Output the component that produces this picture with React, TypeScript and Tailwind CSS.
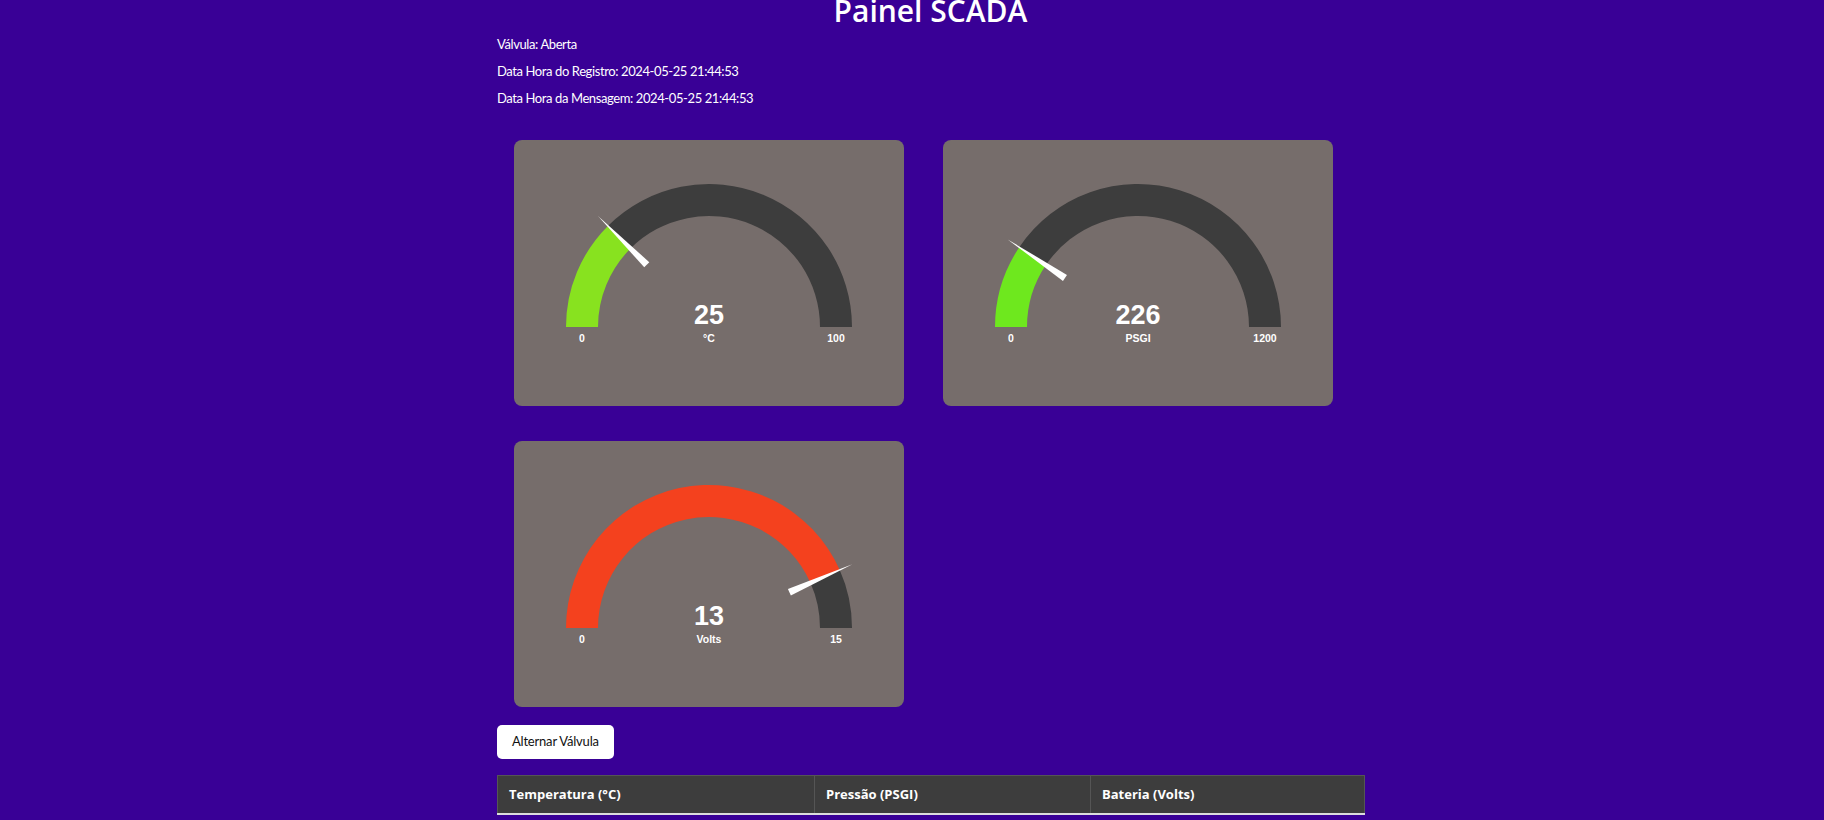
import React from "react";

type Reading = { value: number; min: number; max: number; unit: string; color: string };

// geometria do medidor (coordenadas dentro do card 390x266)
const CX = 195;
const CY = 187;
const R_OUT = 143;
const R_IN = 111;

const polar = (r: number, deg: number): [number, number] => {
  const rad = (deg * Math.PI) / 180;
  return [CX + r * Math.cos(rad), CY - r * Math.sin(rad)];
};

const band = (from: number, to: number) => {
  const [ox1, oy1] = polar(R_OUT, from);
  const [ox2, oy2] = polar(R_OUT, to);
  const [ix2, iy2] = polar(R_IN, to);
  const [ix1, iy1] = polar(R_IN, from);
  const large = from - to > 180 ? 1 : 0;
  return `M${ox1} ${oy1} A${R_OUT} ${R_OUT} 0 ${large} 1 ${ox2} ${oy2} L${ix2} ${iy2} A${R_IN} ${R_IN} 0 ${large} 0 ${ix1} ${iy1} Z`;
};

const needle = (deg: number) => {
  const rad = (deg * Math.PI) / 180;
  const px = Math.sin(rad);
  const py = Math.cos(rad);
  const [bx, by] = polar(88, deg);
  const [tx, ty] = polar(157, deg);
  const w = 3.6;
  return `${bx + px * w},${by + py * w} ${tx},${ty} ${bx - px * w},${by - py * w}`;
};

const Gauge = ({ value, min, max, unit, color }: Reading) => {
  const angle = 180 - (180 * (value - min)) / (max - min);
  return (
    <div className="w-[390px] h-[266px] rounded-[8px] bg-[#766d6b]">
      <svg width="390" height="266" viewBox="0 0 390 266" className="block">
        <path d={band(180, angle)} fill={color} />
        <path d={band(angle, 0)} fill="#3d3d3d" />
        <polygon points={needle(angle)} fill="#ffffff" />
        <g fill="#ffffff" fontFamily="'Liberation Sans', Arial, sans-serif" fontWeight="bold" textAnchor="middle">
          <text x={CX} y={CY - 3} fontSize="27">{value}</text>
          <text x={CX} y={CY + 14.5} fontSize="10.5">{unit}</text>
          <text x={CX - (R_OUT + R_IN) / 2} y={CY + 14.5} fontSize="10.5">{min}</text>
          <text x={CX + (R_OUT + R_IN) / 2} y={CY + 14.5} fontSize="10.5">{max}</text>
        </g>
      </svg>
    </div>
  );
};

const readings: Reading[] = [
  { value: 25, min: 0, max: 100, unit: "°C", color: "#88e21f" },
  { value: 226, min: 0, max: 1200, unit: "PSGI", color: "#6ee81e" },
  { value: 13, min: 0, max: 15, unit: "Volts", color: "#f4411e" },
];

export default function App() {
  return (
    <div className="min-h-screen bg-[#390096] text-white font-['Lato','Open_Sans',sans-serif] overflow-hidden">
      <div className="ml-[497px] w-[867px] flex flex-col">
        <h1 className="-mt-[4px] text-center text-[30px] leading-[30px] font-semibold font-['Open_Sans',sans-serif]">Painel SCADA</h1>

        <div className="mt-[9px] flex flex-col gap-[9px] text-[13px] leading-[18px] tracking-[-0.4px]">
          <p>Válvula: Aberta</p>
          <p>Data Hora do Registro: 2024-05-25 21:44:53</p>
          <p>Data Hora da Mensagem: 2024-05-25 21:44:53</p>
        </div>

        <div className="mt-[33px] px-[17px] grid grid-cols-[390px_390px] gap-x-[39px] gap-y-[35px]">
          {readings.map((r) => (
            <Gauge key={r.unit} {...r} />
          ))}
        </div>

        <div className="mt-[18px]">
          <button className="h-[34px] px-[15px] rounded-[5px] bg-white text-[13px] tracking-[-0.2px] text-[#111]">Alternar Válvula</button>
        </div>

        <table className="mt-[16px] w-[867px] table-fixed border-collapse text-[13px] font-['Open_Sans',sans-serif]">
          <thead>
            <tr className="bg-[#3d3d3d] h-[38px] border-b-2 border-b-[#dddddd]">
              <th className="w-[317px] border border-[#555] px-[11px] text-left font-bold">Temperatura (°C)</th>
              <th className="w-[276px] border border-[#555] px-[11px] text-left font-bold">Pressão (PSGI)</th>
              <th className="w-[274px] border border-[#555] px-[11px] text-left font-bold">Bateria (Volts)</th>
            </tr>
          </thead>
        </table>
      </div>
    </div>
  );
}
